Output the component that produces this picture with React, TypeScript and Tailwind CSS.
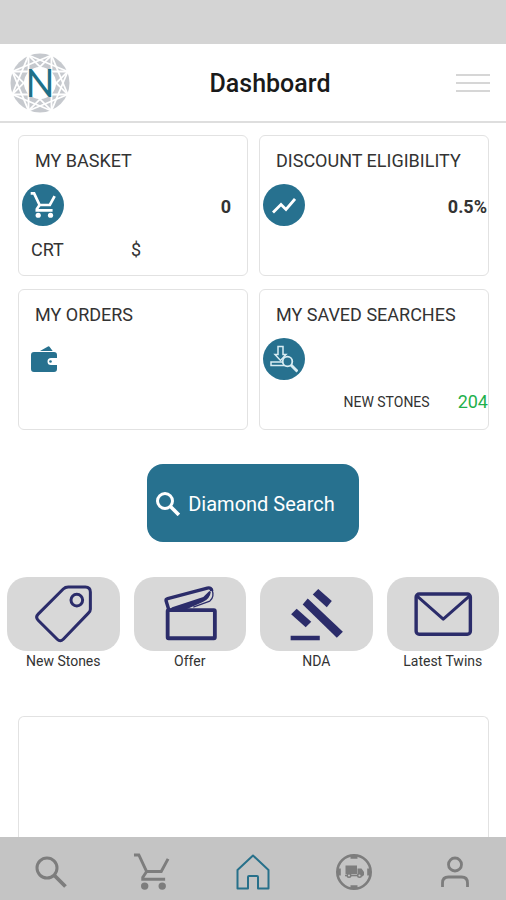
import React from 'react';

const TEAL = '#27718f';
const NAVY = '#2b2c6a';

const point = (step: number) => {
  const angle = (step * Math.PI) / 4 + Math.PI / 8;
  return { x: 30 + 30 * Math.sin(angle), y: 30 - 30 * Math.cos(angle) };
};

// Facet lines of the cut stone: chords that skip 2 and 3 of 8 points
const CHORDS = [2, 3].flatMap((skip) =>
  Array.from({ length: 8 }, (_, i) => ({ key: `${skip}-${i}`, from: point(i), to: point(i + skip) }))
);

const Logo: React.FC = () => (
  <svg viewBox="0 0 60 60" className="size-15" role="img" aria-label="Diamond logo">
    <circle cx="30" cy="30" r="29.5" fill="#c6c9ce" />
    <g stroke="#fff" strokeWidth="1.8">
      {CHORDS.map(({ key, from, to }) => (
        <line key={key} x1={from.x} y1={from.y} x2={to.x} y2={to.y} />
      ))}
    </g>
    <circle cx="30" cy="30" r="16" fill="#fff" />
    <text x="30" y="44" textAnchor="middle" fontSize="38" fontFamily="Lato, sans-serif" fill="#1f7088">N</text>
  </svg>
);

const CartIcon: React.FC<{ className?: string; strokeWidth?: number }> = ({ className, strokeWidth = 3 }) => (
  <svg viewBox="0 0 38 38" className={className} fill="none" stroke="currentColor" strokeWidth={strokeWidth} aria-hidden="true">
    <path d="M1 2h5l8 17h15l7-13" />
    <path d="M14 19l-4 6v2h23" />
    <circle cx="12" cy="34" r="3.8" fill="currentColor" stroke="none" />
    <circle cx="30" cy="34" r="3.8" fill="currentColor" stroke="none" />
  </svg>
);

const TrendIcon: React.FC = () => (
  <svg viewBox="0 0 24 17" className="w-6" fill="none" stroke="currentColor" strokeWidth="2.8" aria-hidden="true">
    <path d="M1 15.500l8-8 5 5L23 2" />
  </svg>
);

const WalletIcon: React.FC = () => (
  <svg viewBox="0 0 27 27" className="w-[27px]" fill={TEAL} aria-hidden="true">
    <path d="M9 5l8-4.500q1-.5 1.700.5l3 4z" />
    <path d="M3 6h20q3 0 3 3v3h-6a3.500 3.500 0 0 0 0 7h6v4q0 3-3 3H3q-3 0-3-3V9q0-3 3-3z" />
    <path d="M20 13h7v5h-7a2.500 2.500 0 0 1 0-5z" fill="#fff" />
    <circle cx="19.500" cy="15.500" r="1.300" />
  </svg>
);

const SavedSearchIcon: React.FC = () => (
  <svg viewBox="0 0 28 28" className="w-7" fill="none" stroke="#d9edf3" strokeWidth="1.5" aria-hidden="true">
    <path d="M8 1.500h5v8h3L10.500 15.500 5 9.500h3z" />
    <path d="M13 17H1v3.500h14" />
    <circle cx="17.500" cy="16.500" r="4.800" fill={TEAL} strokeWidth="1.800" />
    <path d="M21 20l6.500 6.500" strokeWidth="3" />
  </svg>
);

const SearchIcon: React.FC<{ className?: string; strokeWidth?: number }> = ({ className, strokeWidth = 3 }) => (
  <svg viewBox="0 0 32 32" className={className} fill="none" stroke="currentColor" strokeWidth={strokeWidth} aria-hidden="true">
    <circle cx="12" cy="12" r="10" />
    <path d="M19 19l11.500 11.500" strokeWidth={strokeWidth + 0.8} />
  </svg>
);

const TagIcon: React.FC = () => (
  <svg viewBox="0 0 112 74" className="w-full" fill="none" stroke={NAVY} strokeWidth="3" strokeLinejoin="round" aria-hidden="true">
    <path d="M61 10h17q5 0 5 5v17q0 2-2 4L56 62q-3 3-6 0L31 43q-3-3 0-6l25-25q2-2 5-2z" />
    <circle cx="69.500" cy="23" r="5.800" />
  </svg>
);

const OfferIcon: React.FC = () => (
  <svg viewBox="0 0 112 74" className="w-full" fill="none" stroke={NAVY} strokeWidth="3" strokeLinejoin="round" aria-hidden="true">
    <rect x="33.500" y="33" width="47" height="28" rx="1" strokeWidth="3.800" />
    <path d="M34.500 32l-2.500-8q-.5-2 1.500-2.500L73 11q4-1 4.500 3" strokeWidth="3.400" />
    <path d="M34 33l4-3L69 20l6-6 1.500 1q-1 7-8 10L50 33z" fill={NAVY} stroke="none" />
    <path d="M77.500 12q3 8-2 12L59 30" strokeWidth="1.300" />
  </svg>
);

const GavelIcon: React.FC = () => (
  <svg viewBox="0 0 112 74" className="w-full" fill={NAVY} aria-hidden="true">
    <path d="M58 12l13.500 12-5 6-14-12.500z" />
    <path d="M47.500 21.500l35 33-6 6-34-33z" />
    <path d="M36.500 31.500l14.500 13-5.500 5.500L31 37z" />
    <path d="M30.500 58.500h29V63h-29z" />
  </svg>
);

const MailIcon: React.FC = () => (
  <svg viewBox="0 0 112 74" className="w-full" fill="none" stroke={NAVY} strokeWidth="3" strokeLinejoin="round" aria-hidden="true">
    <rect x="29" y="17" width="54" height="40" rx="3" strokeWidth="3.400" />
    <path d="M30 19l26 23 26-23" />
  </svg>
);

const HomeIcon: React.FC = () => (
  <svg viewBox="0 0 34 36" className="w-[34px]" fill="none" stroke="#27708a" strokeWidth="2" strokeLinejoin="round" aria-hidden="true">
    <path d="M17 1.500L32.500 16v18.500H22V23q0-1-1-1h-8q-1 0-1 1v11.500H1.500V16z" />
  </svg>
);

const DeliveryIcon: React.FC = () => (
  <svg viewBox="0 0 38 38" className="w-[38px]" fill="none" stroke="currentColor" strokeWidth="2.600" aria-hidden="true">
    <circle cx="19" cy="19" r="16.700" />
    <path d="M15.500 4h7M15.500 34h7M4 15.500v7M34 15.500v7" strokeWidth="3.600" />
    <path d="M10.500 12.500h11.500v8.500H10.500zM22.500 15.500h4l2.500 3.500v3.500h-6.500z" fill="currentColor" stroke="none" />
    <path d="M10 22.500h18" strokeWidth="1.600" />
    <circle cx="14" cy="22.500" r="1.800" fill="#c4c4c4" strokeWidth="1.400" />
    <circle cx="24.500" cy="22.500" r="1.800" fill="#c4c4c4" strokeWidth="1.400" />
  </svg>
);

const ProfileIcon: React.FC = () => (
  <svg viewBox="0 0 30 32" className="w-[30px]" fill="none" stroke="currentColor" strokeWidth="2.800" aria-hidden="true">
    <circle cx="15" cy="8.500" r="6.500" />
    <path d="M2.500 31v-4q0-6 6-6h13q6 0 6 6v4" />
  </svg>
);

const Badge: React.FC<{ children: React.ReactNode }> = ({ children }) => (
  <div className="flex size-[42px] items-center justify-center rounded-full bg-[#27718f] text-white">{children}</div>
);

const StatCard: React.FC<{ title: string; children: React.ReactNode }> = ({ title, children }) => (
  <section className="min-h-[141px] overflow-hidden rounded-md border border-[#e2e2e2] pt-[13px]">
    <h2 className="mb-[11px] px-4 text-lg leading-6 whitespace-nowrap">{title}</h2>
    {children}
  </section>
);

const SHORTCUTS = [
  { label: 'New Stones', icon: <TagIcon /> },
  { label: 'Offer', icon: <OfferIcon /> },
  { label: 'NDA', icon: <GavelIcon /> },
  { label: 'Latest Twins', icon: <MailIcon /> },
];

const TABS = [
  { label: 'Search', icon: <SearchIcon className="size-8" /> },
  { label: 'Basket', icon: <CartIcon className="w-[37px]" /> },
  { label: 'Home', icon: <HomeIcon /> },
  { label: 'Deliveries', icon: <DeliveryIcon /> },
  { label: 'Profile', icon: <ProfileIcon /> },
];

export default function App() {
  return (
    <div className="flex h-screen flex-col bg-white font-[Roboto,sans-serif] text-[#333]">
      <div className="h-11 shrink-0 bg-[#d4d4d4]" />

      {/* Header */}
      <header className="grid shrink-0 grid-cols-[auto_1fr_auto] items-center border-b-2 border-[#dedede] px-2.5 pt-[9px] pb-2">
        <Logo />
        <h1 className="pt-0.5 pl-5 text-center text-[25px] leading-8 font-medium text-[#1a1a1a]">Dashboard</h1>
        <button type="button" aria-label="Menu" className="flex flex-col gap-1.5 px-1.5 py-2">
          <span className="h-0.5 w-[34px] bg-[#d6d6d6]" />
          <span className="h-0.5 w-[34px] bg-[#d6d6d6]" />
          <span className="h-0.5 w-[34px] bg-[#d6d6d6]" />
        </button>
      </header>

      <main className="flex min-h-0 flex-1 flex-col overflow-hidden pt-3">
        {/* Summary cards */}
        <div className="grid shrink-0 grid-cols-2 gap-x-[11px] gap-y-[13px] pr-[17px] pl-[18px]">
          <StatCard title="MY BASKET">
            <div className="flex items-center justify-between pr-4 pl-[3px]">
              <Badge><CartIcon className="w-[26px]" strokeWidth={4} /></Badge>
              <span className="pt-1 text-lg font-bold">0</span>
            </div>
            <div className="mt-3 grid grid-cols-[100px_1fr] pl-3 text-lg leading-6">
              <span>CRT</span>
              <span>$</span>
            </div>
          </StatCard>

          <StatCard title="DISCOUNT ELIGIBILITY">
            <div className="flex items-center justify-between pr-px pl-[3px]">
              <Badge><TrendIcon /></Badge>
              <span className="pt-1 text-lg font-bold">0.5%</span>
            </div>
          </StatCard>

          <StatCard title="MY ORDERS">
            <div className="flex h-[42px] items-center pl-3">
              <WalletIcon />
            </div>
          </StatCard>

          <StatCard title="MY SAVED SEARCHES">
            <div className="pl-[3px]">
              <Badge><SavedSearchIcon /></Badge>
            </div>
            <div className="mt-2.5 flex items-center justify-end gap-7 leading-6">
              <span className="text-sm">NEW STONES</span>
              <span className="text-lg leading-6 text-[#1fb04b]">204</span>
            </div>
          </StatCard>
        </div>

        <button
          type="button"
          className="mt-[34px] flex shrink-0 items-center gap-2 self-center rounded-2xl bg-[#27718f] pt-[26px] pr-6 pb-6 pl-[9px] text-xl leading-7 text-white"
        >
          <SearchIcon className="w-6" strokeWidth={4} />
          Diamond Search
        </button>

        {/* Shortcuts */}
        <div className="mt-[35px] grid shrink-0 grid-cols-4 gap-3.5 px-[7px]">
          {SHORTCUTS.map((item) => (
            <button key={item.label} type="button" className="flex flex-col items-center text-sm leading-5 whitespace-nowrap">
              <span className="w-full rounded-[20px] bg-[#d8d8d8]">{item.icon}</span>
              {item.label}
            </button>
          ))}
        </div>

        <div className="mr-[17px] ml-[18px] mt-[45px] flex-1 rounded-t-md border border-b-0 border-[#e2e2e2]" />
      </main>

      {/* Bottom tabs */}
      <nav className="grid shrink-0 grid-cols-5 bg-[#c4c4c4] text-[#7d7d7d]">
        {TABS.map((tab) => (
          <a key={tab.label} href="#" aria-label={tab.label} className="flex h-[63px] items-center justify-center pt-1.5">
            {tab.icon}
          </a>
        ))}
      </nav>
    </div>
  );
}
